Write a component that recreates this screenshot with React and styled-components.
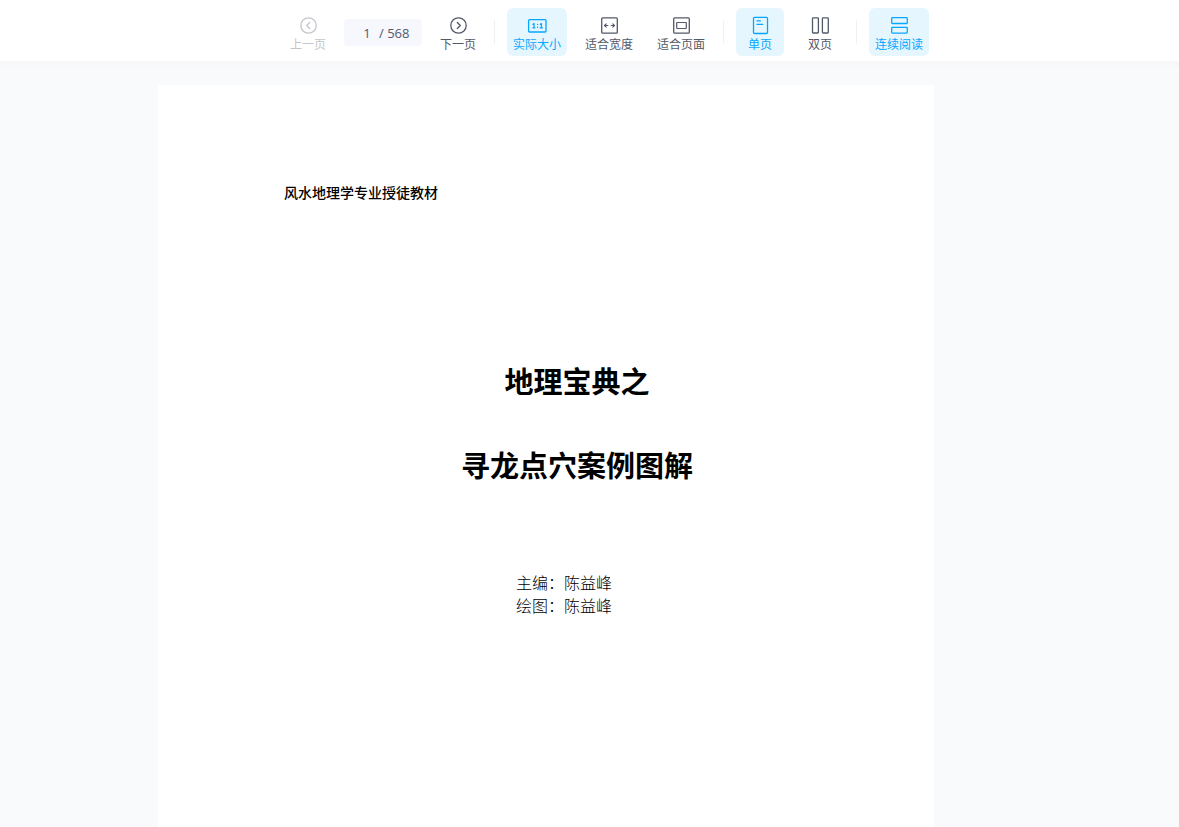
import React, { useState } from 'react'
import styled, { createGlobalStyle } from 'styled-components'

const GlobalStyle = createGlobalStyle`
    * {
        box-sizing: border-box;
    }
    body {
        margin: 0;
        background: #f8fafc;
        font-family: 'Noto Sans CJK SC', sans-serif;
    }
`
const Toolbar = styled.header`
    display: flex;
    justify-content: center;
    align-items: center;
    gap: 12px;
    padding: 8px 0 5px 34px;
    background: #fff;
    box-shadow: 0 6px 0 #f6f8fa;
`
const ToolButton = styled.button`
    display: flex;
    flex-direction: column;
    align-items: center;
    flex-shrink: 0;
    min-width: 48px;
    height: 48px;
    padding: 7px 6px 0;
    border: none;
    border-radius: 6px;
    background: ${({ $active }) => ($active ? '#e6f6ff' : 'transparent')};
    color: ${({ $active }) => ($active ? '#06a7ff' : '#545968')};
    font-family: inherit;
    font-size: 12px;
    line-height: 18px;
    white-space: nowrap;
    cursor: pointer;

    &:disabled {
        color: #c4c6cc;
        cursor: default;
    }
`
const IconSvg = styled.svg`
    display: block;
    width: 20px;
    height: 20px;
    fill: none;
    stroke: currentColor;
    stroke-width: 1.3;
    stroke-linecap: round;
    stroke-linejoin: round;
`
const Divider = styled.span`
    width: 1px;
    height: 24px;
    background: #eff0f4;
`
const PageBox = styled.label`
    display: flex;
    align-items: center;
    flex-shrink: 0;
    width: 78px;
    height: 27px;
    padding: 2px 0 0 12px;
    border-radius: 4px;
    background: #f6f8fd;
    color: #545968;
    font-family: 'Open Sans', sans-serif;
    font-size: 13px;
    line-height: 18px;
`
const PageInput = styled.input`
    width: 22px;
    margin-right: 1px;
    padding: 0;
    border: none;
    outline: none;
    background: transparent;
    color: inherit;
    font: inherit;
    text-align: center;
`
const Viewer = styled.main`
    display: flex;
    justify-content: center;
    padding: 24px 87px 0 0;
`
const Sheet = styled.article`
    width: 100%;
    max-width: 776px;
    min-height: calc(100vh - 85px);
    padding: 97px 64px 0 126px;
    background: #fff;
    color: #000;
`
const Subject = styled.p`
    margin: 0 0 136px;
    font-size: 14px;
    font-weight: 500;
    line-height: 20px;
`
const Title = styled.h1`
    margin: 0 0 65px;
    font-size: 29px;
    font-weight: 700;
    line-height: 84px;
    text-align: center;
`
const TitleLine = styled.span`
    display: block;
`
const Authors = styled.p`
    margin: 0;
    padding-left: 232px;
    font-size: 16px;
    font-weight: 300;
    line-height: 23px;
`
const AuthorLine = styled.span`
    display: block;
`

const icons = {
    prev: (
        <>
            <circle cx="10.5" cy="10.5" r="7.7" />
            <path d="M11.7 7.5l-3 3 3 3" />
        </>
    ),
    next: (
        <>
            <circle cx="10.5" cy="10.5" r="7.7" />
            <path d="M9.3 7.5l3 3-3 3" />
        </>
    ),
    actual: (
        <>
            <rect x="1.6" y="4.6" width="17.4" height="12.4" rx="1" />
            <path d="M5.9 9.3l1.1-.7v4M5.8 12.8h2.2M13.3 9.3l1.1-.7v4M13.2 12.8h2.2M10.6 9.4v.2M10.6 12.2v.2" />
        </>
    ),
    width: (
        <>
            <rect x="2.7" y="2.8" width="15.6" height="15.4" rx="1" />
            <path d="M7.2 8.9l-1.7 1.6 1.7 1.6M13.8 8.9l1.7 1.6-1.7 1.6M5.8 10.5h3.1M12.1 10.5h3.1" strokeWidth="1.1" />
        </>
    ),
    fit: (
        <>
            <rect x="2.7" y="2.8" width="15.6" height="15.4" rx="1" />
            <rect x="5.7" y="7.5" width="9.6" height="6" rx=".4" strokeWidth="1.2" />
        </>
    ),
    single: (
        <>
            <rect x="3.5" y="2.3" width="14" height="16.2" rx="1" />
            <path d="M7 5.9h3.4M7 9.4h5.8" strokeWidth="1.2" />
        </>
    ),
    double: (
        <>
            <rect x="2.5" y="2.8" width="5.9" height="15.2" rx=".8" />
            <rect x="12.4" y="2.8" width="5.9" height="15.2" rx=".8" />
        </>
    ),
    scroll: (
        <>
            <rect x="2.7" y="2.7" width="15.6" height="5.8" rx=".8" />
            <rect x="2.7" y="12.3" width="15.6" height="5.8" rx=".8" />
        </>
    ),
}

function Tool({ icon, label, ...rest }) {
    return (
        <ToolButton type="button" {...rest}>
            <IconSvg viewBox="0 0 20 20" aria-hidden="true">{icons[icon]}</IconSvg>
            {label}
        </ToolButton>
    )
}

const TOTAL = 568

export default function App() {
    const [page, setPage] = useState('1');
    const [zoom, setZoom] = useState('actual');
    const [layout, setLayout] = useState('single');
    const [continuous, setContinuous] = useState(true);

    const current = Number(page) || 1;

    function handleChangePage(event) {
        setPage(event.target.value)
    };

    return (
        <>
            <GlobalStyle />
            <Toolbar>
                <Tool icon="prev" label="上一页" disabled={current <= 1} onClick={() => setPage(String(current - 1))} />
                <PageBox>
                    <PageInput type="text" aria-label="页码" value={page} onChange={handleChangePage} />
                    / {TOTAL}
                </PageBox>
                <Tool icon="next" label="下一页" disabled={current >= TOTAL} onClick={() => setPage(String(current + 1))} />
                <Divider />
                <Tool icon="actual" label="实际大小" $active={zoom === 'actual'} onClick={() => setZoom('actual')} />
                <Tool icon="width" label="适合宽度" $active={zoom === 'width'} onClick={() => setZoom('width')} />
                <Tool icon="fit" label="适合页面" $active={zoom === 'fit'} onClick={() => setZoom('fit')} />
                <Divider />
                <Tool icon="single" label="单页" $active={layout === 'single'} onClick={() => setLayout('single')} />
                <Tool icon="double" label="双页" $active={layout === 'double'} onClick={() => setLayout('double')} />
                <Divider />
                <Tool icon="scroll" label="连续阅读" $active={continuous} onClick={() => setContinuous(!continuous)} />
            </Toolbar>
            <Viewer>
                <Sheet>
                    <Subject>风水地理学专业授徒教材</Subject>
                    <Title>
                        <TitleLine>地理宝典之</TitleLine>
                        <TitleLine>寻龙点穴案例图解</TitleLine>
                    </Title>
                    <Authors>
                        <AuthorLine>主编：陈益峰</AuthorLine>
                        <AuthorLine>绘图：陈益峰</AuthorLine>
                    </Authors>
                </Sheet>
            </Viewer>
        </>
    )
}
